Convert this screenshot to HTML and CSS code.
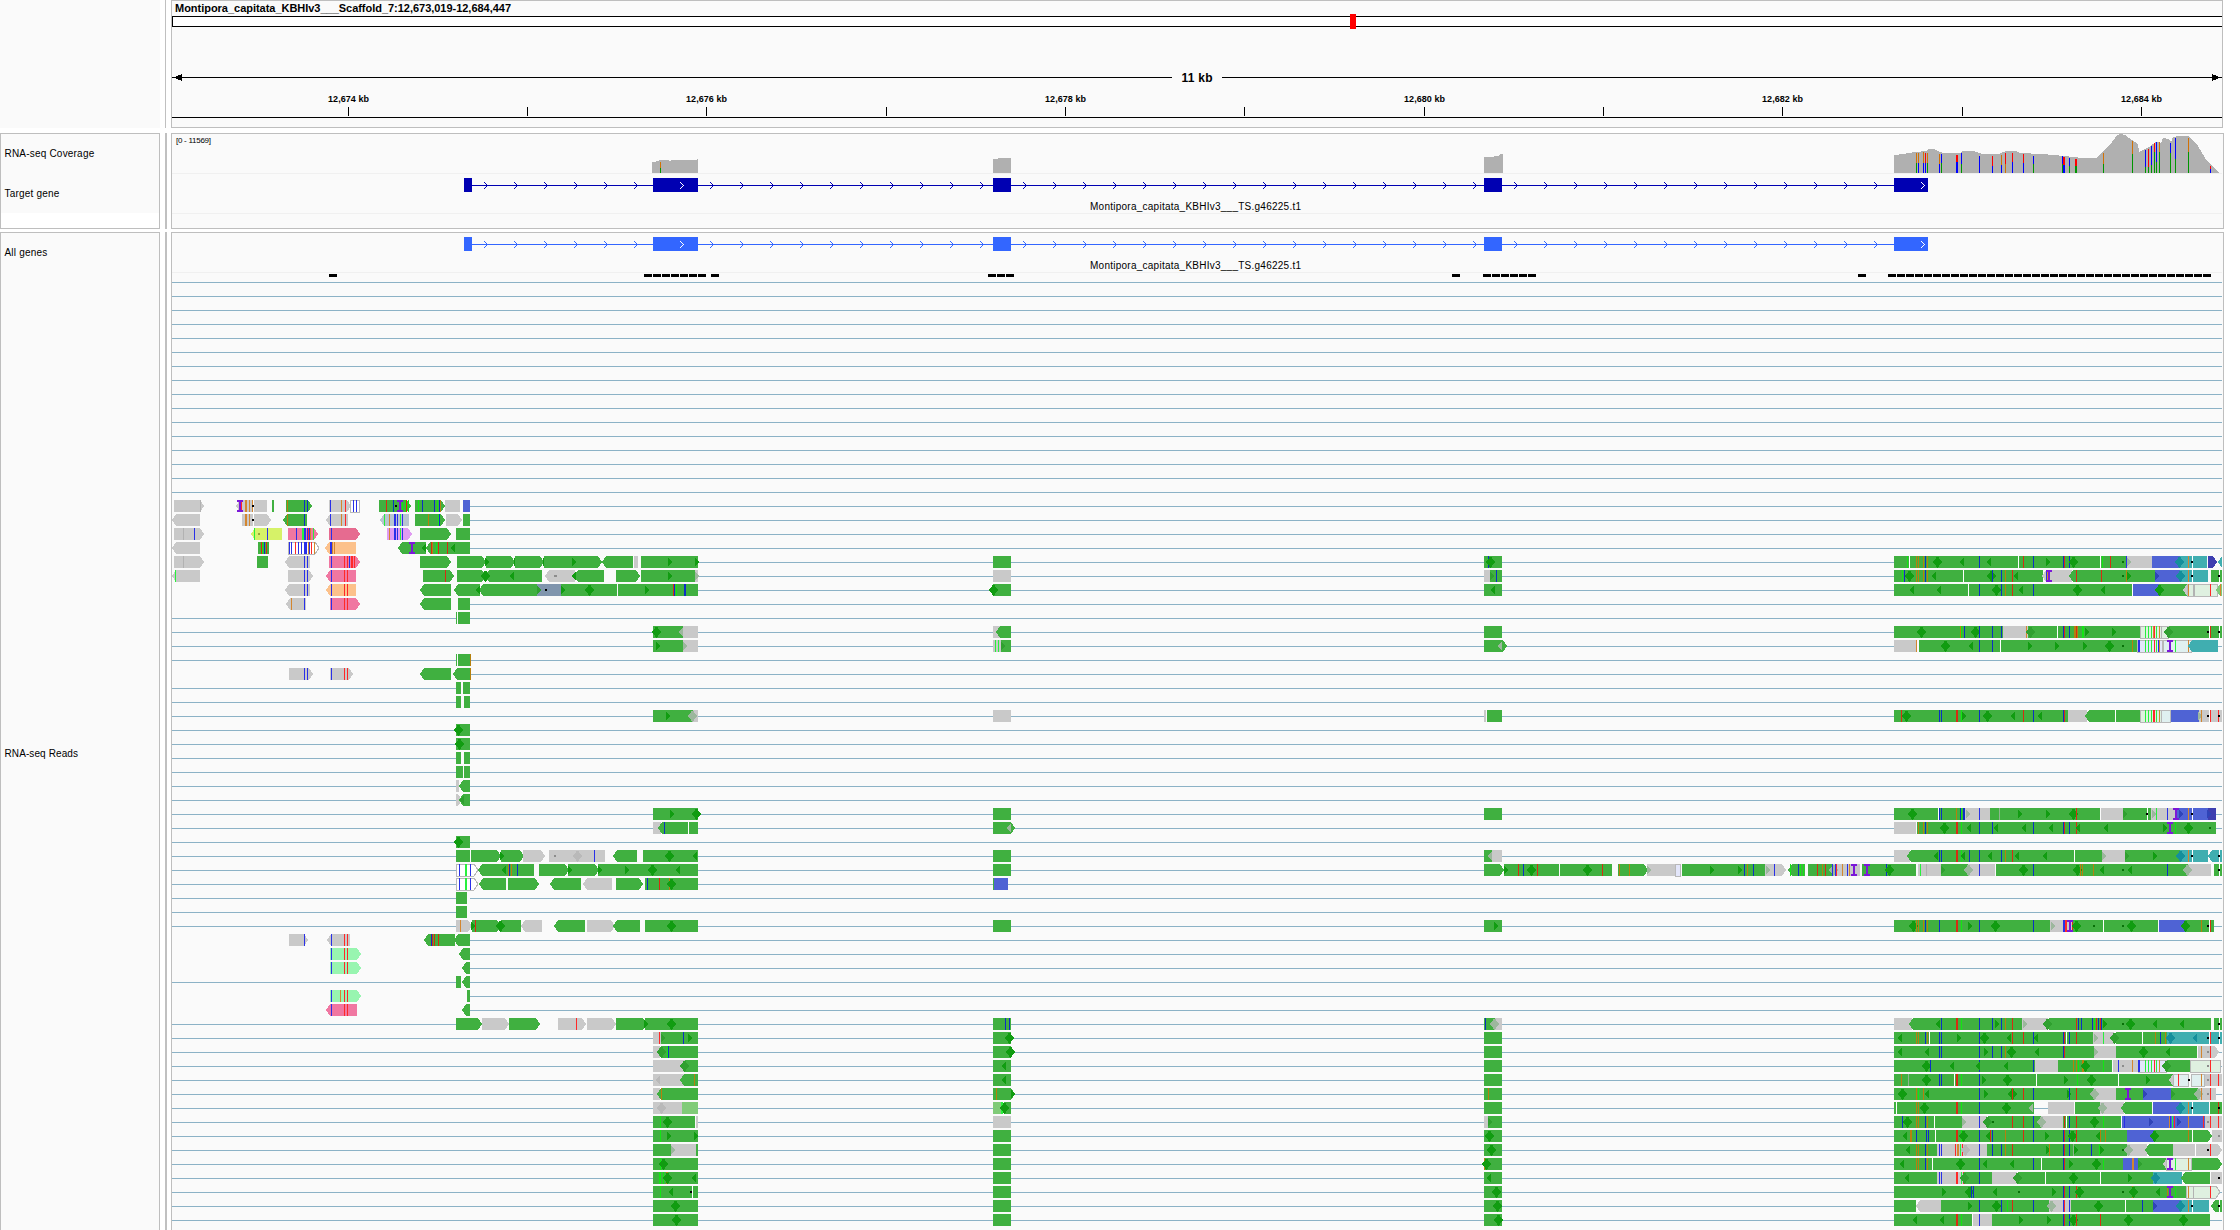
FILE: index.html
```html
<!DOCTYPE html>
<html lang="en">
<head>
<meta charset="utf-8">
<title>Montipora_capitata_KBHIv3___Scaffold_7</title>
<link rel="stylesheet" href="styles.css">
</head>
<body>
<main class="browser">
  <section class="panel panel-ruler">
    <div class="names"></div>
    <div class="splitter"></div>
    <div class="data"><svg id="ruler" viewBox="172 1 2050 126" width="2050" height="126">
      <text class="locus" x="175" y="12" textLength="336">Montipora_capitata_KBHIv3___Scaffold_7:12,673,019-12,684,447</text>
      <text class="span" x="1181.5" y="82" textLength="31">11 kb</text>
    </svg></div>
  </section>
  <section class="panel panel-target">
    <div class="names">
      <div class="name name-coverage"><span>RNA-seq Coverage</span></div>
      <div class="name name-gene"><span>Target gene</span></div>
    </div>
    <div class="splitter"></div>
    <div class="data"><svg id="target" viewBox="172 134 2050 94" width="2050" height="94">
      <text class="scale" x="176" y="143" textLength="35">[0 - 11569]</text>
    </svg></div>
  </section>
  <section class="panel panel-reads">
    <div class="names">
      <div class="name name-all"><span>All genes</span></div>
      <div class="name name-reads"><span>RNA-seq Reads</span></div>
    </div>
    <div class="splitter"></div>
    <div class="data"><svg id="reads" viewBox="172 233 2050 997" width="2050" height="997"></svg></div>
  </section>
</main>
<script src="tracks.js"></script>
</body>
</html>
```
FILE: styles.css
```css
* { box-sizing: border-box; }
body {
  margin: 0;
  background: #fff;
  color: #000;
  font-family: "Liberation Sans", Arial, sans-serif;
  overflow: hidden;
}
.browser {
  display: flex;
  flex-direction: column;
  width: 2240px;
  height: 1230px;
}
.panel { display: flex; flex: none; }
.panel-ruler { height: 128px; margin-bottom: 5px; }
.panel-target { height: 96px; margin-bottom: 3px; }
.panel-reads { height: 998px; }
.names {
  width: 160px;
  border: 1px solid #bebebe;
  background: #fafafa;
}
.panel-ruler .names { border: 0; }
.panel-target .names { background: #fff; }
.panel-reads .names, .panel-reads .data { border-bottom: 0; }
.splitter { width: 2px; margin: 0 4px 0 5px; background: #c0c0c0; }
.panel-ruler .splitter { width: 1px; margin-right: 5px; }
.data {
  width: 2053px;
  border: 1px solid #bebebe;
  background: #fafafa;
}
.panel-ruler .data { width: 2052px; }
.data svg { display: block; shape-rendering: crispEdges; }
.name {
  display: flex;
  align-items: center;
  padding-left: 3.5px;
  background: #fafafa;
  font-size: 10px;
  letter-spacing: 0.2px;
}
.name-coverage { height: 39px; }
.name-gene { height: 40px; }
.name-all { height: 39px; }
.name-reads { height: 958px; }
.name-coverage span { padding-bottom: 1px; }
.name-gene span { padding-top: 1px; }
.name-all span { padding-bottom: 1px; }
.name-reads span { padding-top: 4px; letter-spacing: 0.1px; }
text { fill: #000; }
.locus { font-size: 11px; font-weight: bold; }
.span { font-size: 12px; font-weight: bold; }
.tick { font-size: 9px; font-weight: bold; text-anchor: middle; }
.scale { font-size: 8px; }
.gene-name { font-size: 10px; text-anchor: middle; }
```
FILE: tracks.js
```js
const NS = 'http://www.w3.org/2000/svg';
const ruler = document.getElementById('ruler');
const target = document.getElementById('target');
const reads = document.getElementById('reads');

function add(svg, tag, attrs, text) {
  const el = document.createElementNS(NS, tag);
  for (const k in attrs) el.setAttribute(k, attrs[k]);
  if (text) el.textContent = text;
  svg.appendChild(el);
  return el;
}
function rect(svg, x, y, w, h, fill) {
  add(svg, 'rect', { x, y, width: w, height: h, fill });
}
function poly(svg, points, fill) {
  add(svg, 'polygon', { points, fill });
}

// Ideogram and ruler
rect(ruler, 172, 16, 2050, 11, '#000');
rect(ruler, 173, 17, 2049, 9, '#fff');
rect(ruler, 1350, 14, 6, 15, '#f00');
rect(ruler, 172, 77, 1000, 1, '#000');
rect(ruler, 1222, 77, 1000, 1, '#000');
poly(ruler, '173,77.5 182,74 182,81', '#000');
poly(ruler, '2221,77.5 2212,74 2212,81', '#000');
rect(ruler, 172, 117, 2050, 1, '#000');
[348, 527, 706, 886, 1065, 1244, 1424, 1603, 1782, 1962, 2141].forEach((x, i) => {
  rect(ruler, x, 107, 1, 9, '#000');
  if (i % 2 === 0) add(ruler, 'text', { class: 'tick', x: x + 0.5, y: 102, textLength: 41 }, `12,${674 + i} kb`);
});

// Gene models
const exons = [[464, 472], [653, 698], [993, 1011], [1484, 1502], [1894, 1928]];
function chevron(svg, x, y, fill) {
  for (let d = -3; d <= 3; d++) rect(svg, x - Math.abs(d), y + d, 1, 1, fill);
}
function gene(svg, y, color) {
  rect(svg, 464, y, 1464, 1, color);
  exons.forEach(([a, b], i) => {
    rect(svg, a, y - 7, b - a, 14, color);
    if (b - a > 30) chevron(svg, a + 30, y, '#fff');
    const next = exons[i + 1];
    if (next) for (let x = b + 15; x < next[0]; x += 30) chevron(svg, x, y, color);
  });
  add(svg, 'text', { class: 'gene-name', x: 1195.5, y: y + 25, textLength: 211 }, 'Montipora_capitata_KBHIv3___TS.g46225.t1');
}
rect(target, 172, 173, 2050, 1, '#f0f0f0');
rect(target, 172, 213, 2050, 1, '#f0f0f0');
rect(reads, 172, 272, 2050, 1, '#f0f0f0');
gene(target, 185, '#0000b2');
gene(reads, 244, '#3366ff');

// Coverage
const GRAY = '#b0b0b0';
poly(target, '652,173 652,162 656,162 656,161 659,161 659,160 669,160 669,161 671,161 671,160 697,160 697,159 698,159 698,173', GRAY);
poly(target, '993,173 993,159 998,159 998,158 1011,158 1011,173', GRAY);
poly(target, '1484,173 1484,157 1494,157 1494,156 1499,156 1499,155 1500,155 1500,154 1503,154 1503,173', GRAY);
poly(target, `1894,173 1894,155 1903,154 1909,153 1914,152 1927,151 1928,149 1934,149 1940,152 1943,153 1960,153
  1963,151 1974,151 1982,154 1999,154 2006,151 2016,151 2020,153 2042,154 2064,156 2083,158 2096,158 2103,151
  2110,145 2117,135 2121,134 2125,135 2132,140 2138,144 2139,152 2149,147 2156,142 2161,143 2163,138 2168,139
  2171,142 2173,137 2178,136 2188,136 2197,144 2202,153 2207,161 2212,165 2219,173`, GRAY);
const BASE = { o: '#d17105', g: '#009600', b: '#0000ff', r: '#ff0000' };
`660 162 168 og|1916 153 163 og|1918 153 163 ob|1923 152 163 ob|1925 153 163 rb|1927 153 163 og|1939 154 164 ob
1941 154 163 bg|1956 155 162 rb 2|1961 153 164 bg|1979 156 160 bb|1992 156 166 rb|2001 155 165 ob|2005 153 164 ro
2012 153 162 rb|2023 154 163 rb|2033 156 164 bg|2062 156 164 bg|2063 157 165 rb 2|2069 158 166 bg|2075 159 166 rg 2
2103 153 164 og|2132 141 154 og|2145 150 167 bg|2148 149 167 rg|2151 146 165 bg|2154 143 152 rg|2156 142 162 bg
2159 142 152 og|2170 143 153 bg|2175 138 159 bg|2188 138 152 og|2210 166 169 rb`.split(/[|\n]/).forEach(s => {
  const [x, top, mid, c, w] = s.trim().split(' ');
  rect(target, +x, +top, +(w || 1), mid - top, BASE[c[0]]);
  rect(target, +x, +mid, +(w || 1), 173 - mid, BASE[c[1]]);
});

// Overflow marks above the alignments
const marks = [329, 711, 988, 997, 1006, 1452, 1483, 1492, 1501, 1510, 1519, 1528, 1858, 2203];
for (let i = 0; i < 7; i++) marks.push(644 + 9 * i);
for (let i = 0; i < 35; i++) marks.push(1888 + 9 * i);
marks.forEach(x => rect(reads, x, 274, 8, 3, '#000'));

// Alignment rows: connector lines first
const LINE = '#8cb2c6';
for (let y = 282; y < 1230; y += 14) rect(reads, 172, y, 2050, 1, LINE);

/*
  Alignments, grouped by locus as [origin x, units per pixel, rows].
  X1-2  read (capital = colour), with < or > for a pointed end
  x1:w  mismatch (lower case = base), optional width in pixels
  *1    overlap diamond    (1 )1  overlap half    .1  deletion    #1  insertion
  _1-2  cleared span       =1-2   connector
*/
const FILL = {
  G: '#40b040', A: '#c9c9c9', B: '#4f63d4', T: '#40aeb0', I: '#3e3eb0', P: '#f077a1', Q: '#e66b90',
  O: '#fcc18b', Y: '#d6f268', V: '#e09bf2', S: '#b7c5d0', U: '#8095ad', M: '#98f5b0', H: '#80cb78',
  K: '#dff0e0', L: '#e3e6fa', C: '#e0f0f0', W: '#fff'
};
const MARK = { r: '#ff2828', b: '#2a30e8', g: '#28f03c', o: '#d3862f', w: '#fff', m: '#b2b2b2' };
const OVER_GREEN = { r: '#d62d12', b: '#0c2fc4', g: '#12e612', o: '#b5800e', w: '#fff', m: '#8fb58f' };
const OVER = { '': '#119c11', a: '#9cb79d', t: '#158f9c', b: '#2f44b8', n: '#b9b9b9', d: '#2fa02f' };

const loci = [
[160, 3, `
0 _36-930 A42-132> m121 A228-279< r244 #240 o257:2 o267 o276 .279 A282-321 G336-342 G378-456> o382 b433 b442 A507-572> b511 o544 r556 W570-600 b580 b589 G657-752> r679 b701 .708 g728 #720 g735 r740 g745 G765-856> g775 b787 b823 g833 b838 o842 A855-900 B909-930
1 _36-930 A36-120< A246-333> o256:2 o267 w279 .279 G370-441< o382 b433 A498-564< b511 o544 r556 S660-747< g673 o688 b703:2 b712 g722 b727 G765-855> o805 g834 b838 A858-906> G909-930
2 _36-930 A42-132> m70 b103 Y273-366< g283 .297o b322 P384-474> b409 g428:2 b434:2 b442 r445 b448 o452 g460 Q507-600> b515 V681-756> o688 b703 b706 b712 g722 b727 G780-873> G888-930
3 _36-930 A36-120< G294-327 r304 g308 b313 r319 W384-477> b388 b394 r406 b415 b424 b433:2 b439 o445 b448 r455 o463 O496-588< b511:2 o517 o523 G714-798< #756 G798-886< (798 r814 o817 g828 r836 r862 (884 G886-930
4 _36-930 A42-132> m70 G291-297 G294-324 A375-450< b433 b442 P507-600> b515 r553 r562 b568 r573:2 r584 G780-873> G891-930
5 _36-930 A36-120< g46 A384-459> b433 b442 P498-588< b515 r553 r562 G789-882> r856 G891-930
6 _36-930 A375-450< b433 b442 O498-588< b515 r553 r562 G780-873< G882-930<
7 _36-930 A378-438< o394 b433 P510-600> b515 r553 r562 G780-873< G894-930
8 G888-891 G894-930
11 G888-891 G894-930 o931
12 _36-930 A387-459> b433 b442 A510-579> b515 r553 r562 G780-873< G879-930< o931
13 G888-903 G909-930
14 G888-903 G912-930
16 G888-930 *896
17 G888-930 *898
18 G888-903 G912-930
19 G888-909 G912-930
20 A888-897 G897-930<`],
[440, 3, `
4 G51-138> G138-225> )135 )222 G225-311> )308 G312-487> )396 G487-579< A582-594 G603-774 )684 )765
5 G51-138> G136-222< *137 G222-306 (222 A315-405< .346m G403-492< (407 G528-600> G603-774 )684 A765-774 )765a
6 G42-120< G118-292< (120 U291-363 )291d .320 G363-531 )363 *447 G534-774 )615 r700 b703 g709 b732:2
9 G639-729 *648 A729-774 (729a
10 G639-729 )648 A729-774 )729a
15 G639-759 )678 A759-774 *757a`],
[160, 2.8, `
21 A829-845> G837-868< (850d
22 G1380-1506 )1427 *1501
23 A1380-1403 G1395-1506< b1412 w1479
24 G829-868 *837
25 G829-868 G871-955> G955-1018> )953 A1016-1078> A1089-1170 .1107m A1170-1246 *1168n b1216 G1268-1336< G1352-1506 *1427 (1504
26 W829-889> b838 g856:2 b869 G891-1047< (968 o975 b978 o984 b1001 G1061-1146> G1142-1228> )1142 G1226-1506 )1226 )1303 *1380 (1455
27 W829-889> b838 g856:2 b869 G892-969< G974-1061> G1092-1179< A1184-1266< G1277-1352> G1358-1506 b1365 r1398 o1426 *1433
28 G829-860 _860-868
29 G829-860 _860-868
30 A829-874> o841 G874-955> )872 r883 G955-1011 *953 A1010-1070< G1103-1190< A1196-1274> G1268-1344< G1358-1506 *1433
31 _34-868 A361-414> b404 A468-532< b480 r516 r525 G739-826< b760 r764 r768 r779 G824-868<
32 _34-868 M476-563> b480 r516 r525 G837-868<
33 _34-868 M476-563> b480 r516 r525 G846-868<
34 G829-843 G846-868<
35 _34-868 M476-563> b480 o505 r516 r525 G860-868
36 _34-868 P465-552< b480 r516 r525 G846-868<
37 G829-902> A902-976> G977-1064> A1114-1193> r1166 A1196-1277> G1277-1364> G1358-1506 )1355 *1433
38 A1380-1403 r1398 G1403-1506 )1403d b1466 )1478
39 A1380-1400 G1392-1506< *1403d g1420 b1423
40 A1380-1470 G1470-1506 *1469d
41 A1380-1470 (1400n G1457-1506< o1497
42 A1380-1400 G1392-1506< o1404
43 A1380-1462 *1405n H1462-1506
44 G1380-1498 g1402 *1422 A1501-1506
45 G1380-1506 g1402 )1420 )1495
46 G1380-1431 A1431-1502 )1431a G1502-1506
47 G1380-1506 g1402 *1411
48 G1380-1506 g1399:2 g1409 o1417:2 *1422 (1500
49 G1380-1506 g1402 (1436 w1491 .1489
50 G1380-1506 *1442
51 G1380-1506 *1445`],
[980, 2.8, `
4 G36-87
5 A36-87
6 G36-87 *39
9 A36-59 G46-87<
10 A36-59 g43 g52 G59-87 )59d
15 A36-87
22 G36-87
23 G36-98> (86a
25 G36-87
26 G36-87
27 G36-39 B39-78
30 G36-87`],
[980, 2.8, `
4 G1411-1462 b1424 *1430
5 A1411-1428 G1428-1462 )1428d b1446
6 G1411-1462 (1442
9 G1411-1462
10 G1411-1476> (1461a
15 A1411-1417 G1420-1462
22 G1411-1462
25 G1411-1434 A1434-1462 (1434a
30 G1411-1462 )1440`],
[985, 3, `
37 G24-78 b61 b73
38 G24-78 *73
39 G24-78 *75
40 G24-78 (63
41 G24-78 (63
42 G24-90> o34 )77
43 H24-48 g50:2 G57-78 *57
44 A24-78
45 G24-78
46 G24-78
47 G24-78
48 G24-78
49 G24-78
50 G24-78
51 G24-78`],
[985, 3, `
37 G1497-1529 b1501 A1529-1551 *1528a
38 G1497-1551
39 G1497-1551
40 G1497-1551
41 G1497-1551
42 G1497-1551 o1510
43 G1497-1551
44 A1497-1509 G1509-1551 )1509d
45 G1497-1551 *1512
46 G1497-1551 *1518
47 G1497-1551 o1498 *1504
48 G1497-1551 (1518
49 G1497-1551 *1533
50 G1497-1551 *1538
51 G1497-1551 *1541`],
[1480, 3, `
26 _12-1314 G12-71> G71-237 )71 r115 b130 *154 r172 G240-396 *322 r367 G414-503> o418 o448 A501-585 )500a L585-603 G606-857 )690 )774 b793 o802 b820 A855-918> )857a b883 G924-975< g931 b955 g960 g971 G984-1060 r1012 o1027 r1036 A1060-1140 *1061a b1058 b1066 r1069 o1087 b1103 o1108 #1122 G1146-1308 #1160 g1218 b1220 *1229`],
[1880, 3, `
4 G42-740 g83 w88 o109 o115 o131 b136 o142 *171 (251 b298 (333 w415 r430 b460 )498 b549:2 r554 b568 *581 w661 g667 r691 .729d A739-816 b739 )742a B816-900 T900-981 *898t o925 w937 .937 I984-1011> T1014-1026<
5 G42-490 g68 b73 *88 o109 o115 o131 b136 o142 (168 w250 *333 b337 b364 o377 r397 (413 A487-575< b499 o502 #507 G568-825< r589 r664 .729d o739 )742 B825-900 )826b T900-984 *900t o925 w937 .937 G993-1026 w1017 .1017
6 G42-756 (101 (182 w265 b298 *348 b364 o377 r397 (428 b460 *593 (674 w757 B759-838 G838-921 *838 A910-925< K921-1014 o925 m939:2 r991 H1008-1026< o1021
9 G42-369 *124 o241 g244 b253 *287 b298 b337 b364 A369-445 o439 G445-780 *450d w532 b549:2 r554 b568 o583:2 r589 o592 g608:2 )615 )697 K780-866 g796 g805 g814 o820 r824 g829 o838 m845 G855-1026< *866d .985 w988 r991 w1017 .1017
10 A42-110 o109 G117-771 *197 (278 b298 b337 w361 )445 )526 )609 *688 .729d o757 L771-850 C850-936 b774:2 g796 g805 g814 r823 g829 b835 o838 #870 g886 o926 T924-1014<
15 G42-567 r64 *78 b178 b184 r230:2 g244 )245 b298 *323 (404 r430 b460 (485 b549:2 r554 A564-620 G614-787< w706 K779-845 g796 g805 g814 r820 r824 g829 o838 C843-873 B873-957 A957-1026 )955a o964 w988 .986 r991 r1015 .1017
22 G42-255 *96 w175 b178 b184 o229 b241 g244 b251:2 A255-330 )258a b298 G330-660 m358 )415 )499 *580 r589 A663-729 G729-812 )729d w803 .801 A812-884 )815a g829 b862 B884-984 #888 )896b o925 w937 .937 I984-1008 )982b
23 A42-108 G111-1008 o115 o131 b136 o142 *193 r230:2 g244 (272 b298 b337 (354 (437 b460 (518 b549:2 r554 b568 r589 (600 (683 )850 #870 g886 *924 .991d
25 A42-90 G81-667< (174 b178 b184 r230:2 g244 (254 b268 b298 (335 b364 o377 r397 (417 (500 w583 A667-735 )667a G735-900 )735d )820 T900-985 *900t o925 w937 .937 T984-1026< w1017 .1017
26 G0-108 b19 *29 A114-183 g121 m139 G183-264 )183d A264-345 *264a b298 G348-923 *430 b460 *592 o601 o607 o641 (671 .729d (755 b862 A923-993 *923a G1002-1026 w1017 .1017
30 G42-510 *100 o109 o115 o131 b136 o142 b178 r230:2 g244 )265 b298 *347 b460 A510-575 )512a b549:2 r555:2 G575-834 r578 #570 g586 *590 .642d w670 .729d *754 B837-916 G916-1002 *916 o964 w988 .986 r991
37 A42-96 G88-427< (180 b184 r230:2 g244 b298 b337 )345 b364 o377 r397 A427-503 )430a G495-993< *503d r589 b595 b604 b637 g643 r649 b655 r660 b665 )669 .729d *751 (830 (911 G1002-1026 w1017 .1017
38 G42-640 (65 o109 o115 b136 o142 w148 b178 b184 )231 b298 *313 (393 r397 r430 b460 (474 b549:2 r554 w558 b568 r589 A640-703 )641a g670 G695-865< *704d w787 o826 b841 o857 r865 T862-1026 *871t (950t w988 .986 r991 w1017 .1017
39 G42-642 (65 (146 b178 b184 b298 )313 b337 b364 o377 *395 (476 b549:2 r554 A642-708 )642a G708-951 *789 (869 A954-1017> o964 .986m r991
40 G42-465 *139 b151 (221 b298 (300 (383 b460 A465-534 G534-696 o580 o589 g595 o607:2 *615 g670 A699-774 b715 .729m o757 L774-860 b774:2 g796 g805 g814 r823 g829 o838 G848-937< *860d K930-1022 .985m r991
41 G42-880 o64 m85 *139 b178 b184 w223 r230:2 g244 b298 )306 *382 w469 )553 g592 *633 w715 )799 A866-885< C880-928 r895 .929 C934-974 o964 A974-1026 .986m r991 r1015
42 G42-642 *68 o109 g115 o131 (148 b298 )313 *396 r397 r430 b460 )560 b568 r589 A642-708 *642a G708-790 #744 B790-873 )790b G873-955 )873d A955-1008 *955a o964 .986m r991
43 G42-461 w49 o109 o115 *133 r230:2 g244 b298 *378 (459a _461-504 =461-504 A504-582 G585-668 A661-732 *668a G724-816< B819-902 T902-987 *902t o925 w937 .937 G990-1026 r1015 .1017
44 G42-246 b67 *83 o109 o115 b136 o142 w163 A246-320 )247a b298 G312-483< *321d .339d r397 r430 b460 A483-550 *483a b549:2 G550-723 r554 w560 b568 r589 *643 g670 B726-975 b733 )808b o868 b871 g877 r883 )890b o925 r971 A975-1026 .986m r991 r1015
45 G42-741 (82 o91 o94 b109 b139 b145 w166 r230:2 g244 *249 b298 (330 r331 b337 o377 r430 b460 )495 b549:2 r554 b568 *576 r589 (660 o661 o676 B741-822 G822-996> *822 o925 w937 A995-1026 .1017m
46 G42-172 (90 o109 o115 b136 o142 A172-330 b178 b184 r227 o231 o236 g241 r247 *255n b298 G322-742 b337 b364 o377 r397 )498 o508 b549:2 r554 b568 m580 )583 b634 g658 )660 .729d A742-800 *745a G794-884< A880-1026> w946 .986 r991
47 G42-729 (73 o109 o115 b136 o142 w157 *241 b298 (320 (403 b460 w484 b549:2 r554 )568 *649 g670 B729-774 o758:2 G774-858 )774d A848-860< K858-936 #870 g886 o925 G936-1026>
48 G42-172 (88 A172-252 b178 b184 r230:2 g244 r250 G252-336 *253d b298 A336-411 G403-820< *413d w496 *581 w661 )744 T820-907 *825t G903-990< A992-1026 .1017
49 G42-919 )187 *268 b274 b280 (350 .417d )516 b549:2 r554 b568 r589 *597 .729d o757 *761 (841 o862 #870 g886 K919-1020> o925 m939 r991
50 G42-108 A108-183< G183-508 )265 b298 *348 b364 g382 r397 b460 A508-573 *513a b549:2 r554 b568 G573-819 *656 w736 b787 B819-902 )820b T902-987 *902t o925 w937 .937 G993-1026< w1017 .1017
51 G42-276 (112 (193 r230:2 g244 A279-336 b298 G336-990 )416 )502 b549:2 r554 b568 *580 r589 r661 *746 *910`]
];

const TOKEN = /^([A-Za-z*().#_=])(\d+)(?:-(\d+))?([<>])?(?::(\d))?([a-z])?$/;
loci.forEach(([origin, scale, rows]) => rows.trim().split('\n').forEach(row => {
  const [index, ...tokens] = row.split(' ');
  const y = 500 + 14 * index;
  const px = v => origin + Math.round(v / scale);
  const at = v => origin + Math.floor(v / scale);
  const spans = row.match(/[A-Z]\d+-\d+/g).flatMap(s => s.slice(1).split('-').map(Number));
  const from = px(Math.min(...spans)), to = px(Math.max(...spans));
  rect(reads, from, y, to - from, 12, '#fafafa');
  let current = 'G';
  tokens.forEach(t => {
    const [, kind, a, b, tip, width, tint] = t.match(TOKEN);
    const c = +a;
    if (kind === '_') rect(reads, px(c), y, px(+b) - px(c), 12, '#fafafa');
    else if (kind === '=') rect(reads, px(c), y + 6, px(+b) - px(c), 1, LINE);
    else if (kind === '*') {
      const x = at(c);
      poly(reads, `${x - 4},${y + 6} ${x},${y + 0.5} ${x + 1},${y + 0.5} ${x + 5},${y + 6} ${x + 1},${y + 11.5} ${x},${y + 11.5}`, OVER[tint || '']);
    } else if (kind === '(') {
      const x = px(c);
      poly(reads, `${x - 4},${y + 6} ${x},${y + 1} ${x},${y + 11}`, OVER[tint || '']);
    } else if (kind === ')') {
      const x = px(c);
      poly(reads, `${x + 4},${y + 6} ${x},${y + 1} ${x},${y + 11}`, OVER[tint || '']);
    } else if (kind === '.') {
      const fill = { d: '#087008', m: '#8c8c8c', o: '#98a838' }[tint] || '#000';
      rect(reads, at(c) - 1, y + 5, tint === 'm' && c < 700 ? 3 : 2, 2, fill);
    } else if (kind === '#') {
      const x = px(c);
      rect(reads, x - 1, y, 2, 12, '#7b18d8');
      rect(reads, x - 3, y, 6, 2, '#7b18d8');
      rect(reads, x - 3, y + 10, 6, 2, '#7b18d8');
    } else if (MARK[kind]) {
      rect(reads, at(c), y, +(width || 1), 12, (current === 'G' ? OVER_GREEN : MARK)[kind]);
    } else {
      current = kind;
      const l = px(c), r = px(+b);
      const p = tip === '<' ? `${l},${y + 6} ${l + 4},${y} ${r},${y} ${r},${y + 12} ${l + 4},${y + 12}`
        : tip === '>' ? `${l},${y} ${r - 4},${y} ${r},${y + 6} ${r - 4},${y + 12} ${l},${y + 12}`
        : `${l},${y} ${r},${y} ${r},${y + 12} ${l},${y + 12}`;
      if ('WKLC'.includes(kind)) {
        const edge = tip ? p : `${l + 0.5},${y + 0.5} ${r - 0.5},${y + 0.5} ${r - 0.5},${y + 12.5} ${l + 0.5},${y + 12.5}`;
        add(reads, 'polygon', { points: edge, fill: FILL[kind], stroke: '#b8b8b8' });
      } else poly(reads, p, FILL[kind]);
    }
  });
}));
```
